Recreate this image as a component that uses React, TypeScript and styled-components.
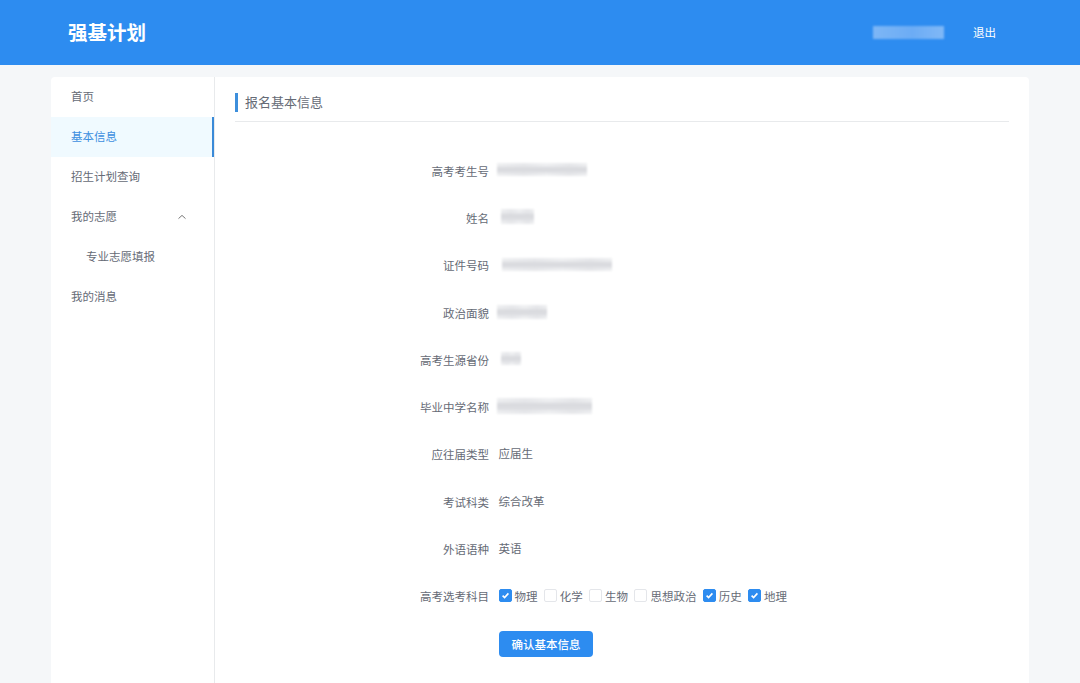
import { FC } from 'react'
import styled, { createGlobalStyle } from 'styled-components'

const fontStack = '"Noto Sans CJK SC", "Noto Sans", "Liberation Sans", sans-serif'

const GlobalStyle = createGlobalStyle`
  html, body {
    margin: 0;
    padding: 0;
    height: 100%;
    overflow: hidden;
    background: #f5f7f9;
    font-family: ${fontStack};
  }
  * {
    box-sizing: border-box;
  }
`

type Field = {
  label: string
  value?: string
  blur?: { width: number; height: number; offset: number }
}

const fields: Field[] = [
  { label: '高考考生号', blur: { width: 90, height: 13, offset: -2 } },
  { label: '姓名', blur: { width: 33, height: 15, offset: 2 } },
  { label: '证件号码', blur: { width: 110, height: 13, offset: 3 } },
  { label: '政治面貌', blur: { width: 50, height: 14, offset: -2 } },
  { label: '高考生源省份', blur: { width: 20, height: 13, offset: 2 } },
  { label: '毕业中学名称', blur: { width: 95, height: 16, offset: -2 } },
  { label: '应往届类型', value: '应届生' },
  { label: '考试科类', value: '综合改革' },
  { label: '外语语种', value: '英语' },
]

const subjects = [
  { name: '物理', checked: true },
  { name: '化学', checked: false },
  { name: '生物', checked: false },
  { name: '思想政治', checked: false },
  { name: '历史', checked: true },
  { name: '地理', checked: true },
]

const CheckMark: FC = () => (
  <svg width="9" height="9" viewBox="0 0 9 9" fill="none">
    <path d="M1.6 4.6 L3.6 6.6 L7.4 2.4" stroke="#fff" strokeWidth="1.6" />
  </svg>
)

export default function App() {
  return (
    <>
      <GlobalStyle />
      <Header>
        <Logo>强基计划</Logo>
        <UserArea>
          <UserName />
          <Logout>退出</Logout>
        </UserArea>
      </Header>
      <Main>
        <Sidebar>
          <MenuItem>首页</MenuItem>
          <MenuItem $active>基本信息</MenuItem>
          <MenuItem>招生计划查询</MenuItem>
          <MenuItem>
            我的志愿
            <Chevron width="10" height="10" viewBox="0 0 10 10" fill="none">
              <path d="M1.5 6.6 L5 3.4 L8.5 6.6" stroke="#777" strokeWidth="1" />
            </Chevron>
          </MenuItem>
          <MenuItem $sub>专业志愿填报</MenuItem>
          <MenuItem>我的消息</MenuItem>
        </Sidebar>
        <Content>
          <TitleBar>
            <Title>报名基本信息</Title>
          </TitleBar>
          <Form>
            {fields.map((f) => (
              <FormRow key={f.label}>
                <Label>{f.label}</Label>
                {f.blur ? (
                  <BlurValue $width={f.blur.width} $height={f.blur.height} $offset={f.blur.offset} />
                ) : (
                  <Value>{f.value}</Value>
                )}
              </FormRow>
            ))}
            <FormRow>
              <Label>高考选考科目</Label>
              <Subjects>
                {subjects.map((s) => (
                  <Subject key={s.name}>
                    <Box $checked={s.checked}>{s.checked && <CheckMark />}</Box>
                    {s.name}
                  </Subject>
                ))}
              </Subjects>
            </FormRow>
            <ButtonRow>
              <Confirm>确认基本信息</Confirm>
            </ButtonRow>
          </Form>
        </Content>
      </Main>
    </>
  )
}

const Header = styled.header`
  height: 65px;
  background: #2d8cf0;
  color: #fff;
  display: flex;
  align-items: center;
  justify-content: space-between;
  padding: 0 84px 0 68px;
`

const Logo = styled.div`
  font-size: 19.5px;
  font-weight: 700;
  margin-top: -2px;
`

const UserArea = styled.div`
  display: flex;
  align-items: center;
  gap: 29px;
`

const UserName = styled.div`
  width: 71px;
  height: 13px;
  background: linear-gradient(90deg, #7db6f6, #6cacf5 55%, #80b8f7);
  filter: blur(1px);
`

const Logout = styled.a`
  font-size: 11.5px;
  color: #fff;
  margin-top: -2px;
`

const Main = styled.main`
  display: flex;
  width: 978px;
  height: 619px;
  margin: 12px 0 0 51px;
  background: #fff;
  border-radius: 4px 4px 0 0;
`

const Sidebar = styled.nav`
  flex: 0 0 164px;
  border-right: 1px solid #e8eaec;
`

const MenuItem = styled.div<{ $active?: boolean; $sub?: boolean }>`
  height: 40px;
  padding: 0 25px 2px ${(p) => (p.$sub ? '35px' : '20px')};
  display: flex;
  align-items: center;
  justify-content: space-between;
  font-size: 11.5px;
  color: ${(p) => (p.$active ? '#3d8fe0' : '#666b76')};
  background: ${(p) => (p.$active ? '#f0faff' : 'transparent')};
  border-right: 2px solid ${(p) => (p.$active ? '#3a8ad8' : 'transparent')};
`

const Chevron = styled.svg`
  margin-top: 2px;
`

const Content = styled.section`
  flex: 1;
  padding: 16px 20px 0;
`

const TitleBar = styled.div`
  height: 29px;
  border-bottom: 1px solid #e8eaec;
`

const Title = styled.h2`
  margin: 0;
  height: 19px;
  line-height: 18px;
  padding-left: 7px;
  border-left: 3px solid #3d8fdc;
  font-size: 13px;
  font-weight: 400;
  color: #666b76;
`

const Form = styled.div`
  margin-top: 25px;
  display: grid;
  grid-auto-rows: 47.3px;
`

const FormRow = styled.div`
  display: flex;
  align-items: center;
  font-size: 11.5px;
  color: #666b76;
`

const Label = styled.label`
  width: 264px;
  padding-right: 10px;
  text-align: right;
`

const Value = styled.span`
  margin-top: -2px;
  margin-left: -0.5px;
`

const BlurValue = styled.div<{ $width: number; $height: number; $offset: number }>`
  width: ${(p) => p.$width}px;
  height: ${(p) => p.$height}px;
  margin-left: ${(p) => p.$offset}px;
  margin-top: -2px;
  background:
    linear-gradient(180deg, transparent 20%, #d9dade 40%, #dcdde1 65%, transparent 85%),
    linear-gradient(90deg, #eeeff1, #e7e8eb 30%, #eff0f2 55%, #e6e7ea 80%, #eeeff1);
  filter: blur(1px);
`

const Subjects = styled.div`
  display: flex;
  gap: 6.3px;
  margin-top: -1px;
  margin-left: -0.5px;
`

const Subject = styled.span`
  display: flex;
  align-items: center;
  gap: 3px;
`

const Box = styled.span<{ $checked: boolean }>`
  width: 13px;
  height: 13px;
  border-radius: 2px;
  display: flex;
  align-items: center;
  justify-content: center;
  background: ${(p) => (p.$checked ? '#2d8cf0' : '#fff')};
  border: 1px solid ${(p) => (p.$checked ? '#2d8cf0' : '#e4e6ea')};
`

const ButtonRow = styled.div`
  display: flex;
  align-items: center;
  padding-left: 264px;
`

const Confirm = styled.button`
  width: 94px;
  height: 26px;
  padding: 0;
  border: none;
  border-radius: 4px;
  background: #2d8cf0;
  color: #fff;
  font-family: inherit;
  font-size: 11.5px;
  font-weight: 500;
`
